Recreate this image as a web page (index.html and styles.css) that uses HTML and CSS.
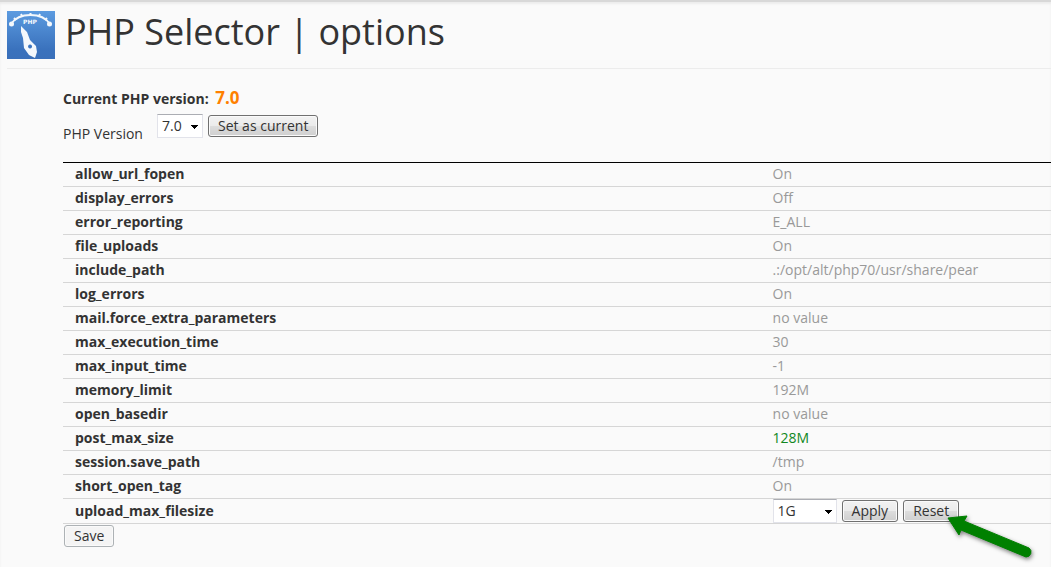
FILE: index.html
```html
<!DOCTYPE html>
<html lang="en">

<head>
	<meta charset="utf-8">
	<title>PHP Selector | options</title>
	<link rel="stylesheet" href="styles.css">
</head>

<body>

	<div class="header">
		<svg class="logo" width="48" height="48" viewBox="0 0 48 48" aria-hidden="true">
			<defs>
				<linearGradient id="sky" x1="0" y1="0" x2="0" y2="1">
					<stop offset="0" stop-color="#5c9be0" />
					<stop offset="0.8" stop-color="#3a72bd" />
					<stop offset="1" stop-color="#3a70ba" />
				</linearGradient>
			</defs>
			<rect width="48" height="48" fill="url(#sky)" />
			<path d="M4 13Q10 4 23.500 4T43 13" fill="none" stroke="#f4f8fc" stroke-width="2" />
			<path d="M7 7l2 2M14 3l1 2M23.500 2v2M33 3l-1 2M40 7l-2 2" stroke="#f4f8fc" stroke-width="2" />
			<circle cx="4.500" cy="13" r="2.500" fill="#f4f8fc" />
			<circle cx="42.500" cy="13" r="2.500" fill="#f4f8fc" />
			<text x="23" y="13" class="logo-text">PHP</text>
			<path fill="#f4f8fc" fill-rule="evenodd" d="M14 15L20 21L23 29L29 35L30 41L28 47L22 44L17 37L16 27L14 21ZM23 33.500a2 2 0 1 0 0.100 0Z" />
		</svg>
		<h1>PHP Selector | options</h1>
	</div>

	<div class="content">
		<p class="current">Current PHP version: <span>7.0</span></p>

		<form class="version">
			<label for="version">PHP Version</label>
			<select id="version" class="select">
				<option>7.0</option>
			</select>
			<button type="button" class="btn">Set as current</button>
		</form>

		<table class="options">
			<tr><th>allow_url_fopen</th><td>On</td></tr>
			<tr><th>display_errors</th><td>Off</td></tr>
			<tr><th>error_reporting</th><td>E_ALL</td></tr>
			<tr><th>file_uploads</th><td>On</td></tr>
			<tr><th>include_path</th><td>.:/opt/alt/php70/usr/share/pear</td></tr>
			<tr><th>log_errors</th><td>On</td></tr>
			<tr><th>mail.force_extra_parameters</th><td>no value</td></tr>
			<tr><th>max_execution_time</th><td>30</td></tr>
			<tr><th>max_input_time</th><td>-1</td></tr>
			<tr><th>memory_limit</th><td>192M</td></tr>
			<tr><th>open_basedir</th><td>no value</td></tr>
			<tr><th>post_max_size</th><td class="changed">128M</td></tr>
			<tr><th>session.save_path</th><td>/tmp</td></tr>
			<tr><th>short_open_tag</th><td>On</td></tr>
			<tr>
				<th><label for="filesize">upload_max_filesize</label></th>
				<td>
					<div class="edit">
						<select id="filesize" class="select wide">
							<option>1G</option>
						</select>
						<button type="button" class="btn">Apply</button>
						<div class="pointed">
							<button type="button" class="btn">Reset</button>
							<svg class="arrow" width="96" height="52" viewBox="0 0 96 52" aria-hidden="true">
								<path d="M2 5L21 3L18 8L83 35A5 5 0 0 1 80 44L15 17L13 22Z" fill="#008000" stroke="#008000" stroke-linejoin="round" />
							</svg>
						</div>
					</div>
				</td>
			</tr>
		</table>

		<button type="button" class="btn save">Save</button>
	</div>

</body>

</html>
```

FILE: styles.css
```css
body {
	box-sizing: border-box;
	min-height: 100vh;
	margin: 0;
	background: #fafafa;
	border-top: 2px solid #d8d8d8;
	box-shadow: inset 0 2px 2px #ececec;
	font: 14px/20px "Open Sans", sans-serif;
	color: #333;
}

.header {
	display: flex;
	gap: 10px;
	height: 57px;
	margin-left: 7px;
	padding-top: 9px;
	border-bottom: 1px solid #ececec;
}

.logo {
	flex: none;
}

.logo-text {
	font: bold 6px "DejaVu Sans", sans-serif;
	fill: #f4f8fc;
	text-anchor: middle;
}

h1 {
	margin: 0;
	font-size: 36px;
	font-weight: normal;
	line-height: 42px;
}

.content {
	padding-left: 63px;
}

.current {
	margin: 0;
	padding-top: 19px;
	font-weight: bold;
}

.current span {
	margin-left: 3px;
	font-size: 17px;
	color: #ff8000;
}

.version {
	display: flex;
	align-items: flex-start;
	height: 48px;
	margin-top: 5px;
}

.version label {
	margin: 10px 14px 0 0;
}

.version .btn {
	margin: 1px 0 0 5px;
}

.select {
	box-sizing: border-box;
	width: 46px;
	height: 24px;
	padding: 0 4px;
	border: 1px solid #e2e3ea;
	border-top-color: #abadb3;
	appearance: none;
	/* small black triangle, one strip per row */
	background-color: #fff;
	background-image: linear-gradient(#000, #000), linear-gradient(#000, #000), linear-gradient(#000, #000), linear-gradient(#000, #000);
	background-repeat: no-repeat;
	background-size: 7px 1px, 5px 1px, 3px 1px, 1px 1px;
	background-position: right 4px top 10px, right 5px top 11px, right 6px top 12px, right 7px top 13px;
	font: inherit;
	color: #333;
}

.wide {
	width: 64px;
}

.btn {
	box-sizing: border-box;
	height: 22px;
	padding: 0 9px;
	border: 1px solid #707070;
	border-radius: 3px;
	background: linear-gradient(#f2f2f2, #ebebeb 50%, #dddddd 50%, #cfcfcf);
	box-shadow: inset 0 0 0 1px #fafafa;
	font: inherit;
	line-height: 18px;
	color: #333;
}

.options {
	width: 100%;
	border-collapse: collapse;
	border-top: 1px solid #000;
}

.options tr {
	border-bottom: 1px solid #d6d6d6;
}

.options th,
.options td {
	padding: 1px 12px 2px;
	text-align: left;
}

.options th {
	width: 70%;
}

.options td {
	padding-left: 18px;
	color: #999;
}

.options .changed {
	color: #118822;
}

.options tr:last-child td {
	padding-top: 0;
	padding-bottom: 0;
}

.edit {
	display: flex;
	align-items: center;
}

.edit .btn {
	margin-left: 5px;
}

.pointed {
	position: relative;
}

.arrow {
	position: absolute;
	left: 48px;
	top: 13px;
	filter: drop-shadow(1px 2px 2px rgba(0, 0, 0, 0.5));
}

.save {
	display: block;
	margin: 1px;
	border-color: #adb2b5;
	background: #f4f4f4;
}
```
